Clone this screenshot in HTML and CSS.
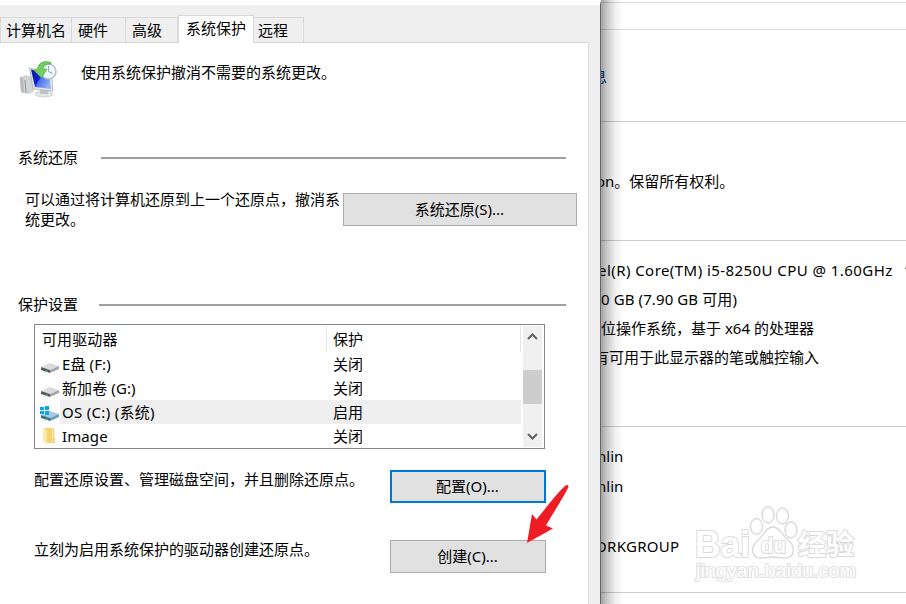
FILE: index.html
```html
<!DOCTYPE html>
<html lang="zh-CN">
<head>
    <meta charset="UTF-8">
    <meta name="viewport" content="width=device-width, initial-scale=1.0">
    <title>系统属性</title>
    <link rel="stylesheet" href="styles.css">
</head>
<body>
    <div class="screen">
        <div class="dialog">
            <div class="tabs">
                <div class="tab tab-name">计算机名</div>
                <div class="tab tab-hardware">硬件</div>
                <div class="tab tab-advanced">高级</div>
                <div class="tab tab-protect active">系统保护</div>
                <div class="tab tab-remote">远程</div>
            </div>

            <div class="panel">
                <div class="intro">
                    <svg class="intro-icon" width="38" height="38" viewBox="0 0 38 38">
                        <defs>
                            <linearGradient id="screen-blue" x1="0" y1="0" x2="1" y2=".6">
                                <stop offset="0" stop-color="#0a1a90"/>
                                <stop offset=".5" stop-color="#0a20d0"/>
                                <stop offset=".56" stop-color="#4a6cf0"/>
                                <stop offset="1" stop-color="#8fb0f8"/>
                            </linearGradient>
                        </defs>
                        <path d="M0 16l6-2 6 2 2 15-6 2-7-2z" fill="#d2d5d7"/>
                        <path d="M0 16l3 1 1 15-3-1z" fill="#b4b9bc"/>
                        <path d="M5 19l1 13" stroke="#8d9296"/>
                        <ellipse cx="24" cy="33" rx="9" ry="3" fill="#e3e6e7" stroke="#b6bbbd" stroke-width=".6"/>
                        <path d="M20 27l8 2v4h-8z" fill="#c0c4c6"/>
                        <path d="M9.500 7l22 5 1.500 18-20-2z" fill="#e4e7e9" stroke="#a4a9ad" stroke-width=".7"/>
                        <path d="M11 8.500l18 4.500 2 15-16-2z" fill="url(#screen-blue)"/>
                        <circle cx="28.500" cy="10.500" r="7.500" fill="#eff6fa" stroke="#b3c5ce" stroke-width="1.600"/>
                        <path d="M28.500 5v5.500l4 2" fill="none" stroke="#83aac0"/>
                        <path d="M31 1.500C24-1 18 2 17.500 8l-4 1 8 8 5.500-9h-4c0-3 3-5 8-5z" fill="#71cd61" stroke="#4ba342" stroke-width=".6"/>
                    </svg>
                    <span>使用系统保护撤消不需要的系统更改。</span>
                </div>

                <div class="group-title title-restore"><span>系统还原</span><i></i></div>
                <div class="restore">
                    <p>可以通过将计算机还原到上一个还原点，撤消系统更改。</p>
                    <button class="btn btn-restore">系统还原(S)...</button>
                </div>

                <div class="group-title title-settings"><span>保护设置</span><i></i></div>
                <div class="drives">
                    <div class="drive-list">
                        <div class="row head">
                            <div class="name">可用驱动器</div>
                            <div class="state">保护</div>
                        </div>
                        <div class="row">
                            <svg class="drive-icon" width="20" height="22" viewBox="0 0 20 22">
                                <path d="M1 15l9-4 9 3-9 4z" fill="#dcdcde"/>
                                <path d="M1 15l9 3v3l-9-3z" fill="#55585a"/>
                                <path d="M10 18l9-4v3l-9 4z" fill="#a4a6a9"/>
                                <path d="M6 18l2 .7v1L6 19z" fill="#35d33b"/>
                            </svg>
                            <div class="name">E盘 (F:)</div>
                            <div class="state">关闭</div>
                        </div>
                        <div class="row">
                            <svg class="drive-icon" width="20" height="22" viewBox="0 0 20 22">
                                <path d="M1 15l9-4 9 3-9 4z" fill="#dcdcde"/>
                                <path d="M1 15l9 3v3l-9-3z" fill="#55585a"/>
                                <path d="M10 18l9-4v3l-9 4z" fill="#a4a6a9"/>
                                <path d="M6 18l2 .7v1L6 19z" fill="#35d33b"/>
                            </svg>
                            <div class="name">新加卷 (G:)</div>
                            <div class="state">关闭</div>
                        </div>
                        <div class="row selected">
                            <svg class="drive-icon" width="20" height="22" viewBox="0 0 20 22">
                                <path d="M1 15l9-4 9 3-9 4z" fill="#a8c9e2"/>
                                <path d="M1 15l9 3v3l-9-3z" fill="#3f6b86"/>
                                <path d="M10 18l9-4v3l-9 4z" fill="#6c9abb"/>
                                <path d="M6 18l2 .7v1L6 19z" fill="#35d33b"/>
                                <path d="M0 7h4v3H0zM5 6h4v4H5zM0 11h4v3H0zM5 11h4v4H5z" fill="#00a8ed"/>
                            </svg>
                            <div class="name">OS (C:) (系统)</div>
                            <div class="state">启用</div>
                        </div>
                        <div class="row">
                            <svg class="drive-icon" width="20" height="22" viewBox="0 0 20 22">
                                <path d="M5 4h9v9l1 2v4H6z" fill="#f4d273"/>
                                <path d="M3 4l4 2v14l-4-2z" fill="#ffe9a5"/>
                                <path d="M12.500 4v14" stroke="#ffe8a0"/>
                            </svg>
                            <div class="name">Image</div>
                            <div class="state">关闭</div>
                        </div>
                    </div>
                    <div class="scrollbar">
                        <svg width="19" height="20" viewBox="0 0 19 20"><path d="M5 13l4.500-4.500L14 13" fill="none" stroke="#606060" stroke-width="2"/></svg>
                        <div class="thumb"></div>
                        <svg width="19" height="20" viewBox="0 0 19 20"><path d="M5 7l4.500 4.500L14 7" fill="none" stroke="#606060" stroke-width="2"/></svg>
                    </div>
                </div>

                <div class="action">
                    <span>配置还原设置、管理磁盘空间，并且删除还原点。</span>
                    <button class="btn focus">配置(O)...</button>
                </div>
                <div class="action">
                    <span>立刻为启用系统保护的驱动器创建还原点。</span>
                    <button class="btn">创建(C)...</button>
                </div>
            </div>
        </div>

        <div class="system-info">
            <div class="section toolbar"></div>
            <div class="section link-row"><a>息</a></div>
            <div class="section copyright"><p>on。保留所有权利。</p></div>
            <div class="section specs">
                <p class="cpu"><span>el(R) Core(TM) i5-8250U CPU @ 1.60GHz</span><span>1</span></p>
                <p class="ram">0 GB (7.90 GB 可用)</p>
                <p class="os">位操作系统，基于 x64 的处理器</p>
                <p class="pen">有可用于此显示器的笔或触控输入</p>
            </div>
            <div class="section computer">
                <p>nlin</p>
                <p>nlin</p>
                <p class="workgroup">ORKGROUP</p>
            </div>
            <div class="section rest"></div>
            <div class="shadow"></div>
        </div>

        <!-- red pointer to the create button -->
        <svg class="arrow" width="46" height="64" viewBox="0 0 46 64">
            <path d="M2 62l5-29 4.500 5.500C21 27 31 13 40.500 4.500q3-1.500 3 1.500C37 19 28 32 21 44.500l7 3z" fill="#ee1c25"/>
        </svg>

        <svg class="watermark" width="170" height="86" viewBox="0 0 170 86">
            <g fill="#fff" stroke="#dadada" stroke-width="1.400">
                <ellipse cx="66.500" cy="26.500" rx="6" ry="8"/>
                <ellipse cx="78" cy="15" rx="6" ry="8"/>
                <ellipse cx="92.500" cy="16" rx="6" ry="8"/>
                <ellipse cx="101" cy="30" rx="6" ry="8"/>
                <path d="M83 27c7 0 9 8 15 13 8 7 7 18-3 18-5 0-8-1-12-1s-7 1-12 1c-10 0-11-11-3-18 6-5 8-13 15-13z"/>
                <text class="wm-logo" x="5" y="57" textLength="55" lengthAdjust="spacingAndGlyphs">Bai</text>
                <text class="wm-du" x="71" y="53" textLength="25" lengthAdjust="spacingAndGlyphs">du</text>
                <text class="wm-cjk" x="108" y="55" textLength="56" lengthAdjust="spacingAndGlyphs">经验</text>
                <text class="wm-url" x="6" y="77" textLength="160" lengthAdjust="spacingAndGlyphs">jingyan.baidu.com</text>
            </g>
        </svg>
    </div>
</body>
</html>
```

FILE: styles.css
```css
* {
    box-sizing: border-box;
}

body {
    margin: 0;
    font-family: "Noto Sans", "Noto Sans CJK SC", sans-serif;
    font-size: 15px;
    color: #000;
    background-color: #fff;
}

p {
    margin: 0;
}

.screen {
    position: relative;
    display: flex;
    width: 906px;
    height: 604px;
    overflow: hidden;
}

/* dialog */
.dialog {
    flex: none;
    width: 601px;
    height: 604px;
    padding-right: 11px;
    border-top: 5px solid #fff;
    border-right: 1px solid #666;
    background-color: #efefef;
}

.tabs {
    display: flex;
    align-items: flex-end;
    height: 38px;
    padding-top: 10px;
    border-bottom: 1px solid #d9d9d9;
}

.tab {
    height: 25px;
    border: 1px solid #d9d9d9;
    border-left: 0;
    border-bottom: 0;
    line-height: 24px;
    white-space: nowrap;
}

.tab-name {
    width: 72px;
    border-left: 1px solid #d9d9d9;
    padding-left: 5px;
}

.tab-hardware {
    width: 54px;
    padding-left: 6px;
}

.tab-advanced {
    width: 52px;
    padding-left: 6px;
}

.tab-protect {
    width: 76px;
    padding-left: 7px;
}

.tab-remote {
    width: 50px;
    padding-left: 4px;
}

.tab.active {
    height: 28px;
    margin-bottom: -1px;
    border-left: 1px solid #d9d9d9;
    line-height: 25px;
    background-color: #fff;
}

.panel {
    height: 561px;
    border-right: 1px solid #d9d9d9;
    background-color: #fff;
}

.intro {
    display: flex;
    padding: 18px 0 0 20px;
    height: 104px;
    line-height: 22px;
}

.intro-icon {
    margin-right: 23px;
}

.group-title {
    display: flex;
    align-items: center;
    width: 566px;
    height: 22px;
    padding-left: 18px;
    line-height: 20px;
}

.group-title span {
    padding-bottom: 3px;
}

.group-title i {
    flex: 1;
    height: 2px;
    background-color: #a0a0a0;
}

.title-restore i {
    margin-left: 23px;
}

.title-settings i {
    margin-left: 21px;
}

.restore {
    display: flex;
    height: 125px;
    padding: 20px 0 0 25px;
}

.restore p {
    width: 318px;
    line-height: 20px;
}

.btn {
    width: 156px;
    height: 33px;
    padding: 0 1px 2px 0;
    border: 1px solid #adadad;
    background-color: #e1e1e1;
    font: inherit;
    color: #000;
}

.btn-restore {
    width: 234px;
    margin-top: 4px;
}

.btn.focus {
    border: 2px solid #0078d7;
}

/* drive list */
.drives {
    display: flex;
    justify-content: space-between;
    width: 511px;
    height: 125px;
    margin: 8px 0 21px 34px;
    padding: 1px 2px 0 0;
    border: 1px solid #828790;
}

.drive-list {
    width: 486px;
}

.row {
    display: flex;
    height: 24px;
    line-height: 24px;
    padding-left: 5px;
}

.row .name {
    flex: none;
    width: 267px;
    padding-left: 2px;
    letter-spacing: 0.1px;
}

.row .state {
    flex: 1;
    padding-left: 6px;
}

.row.head {
    height: 26px;
    line-height: 26px;
}

.row.head .name {
    width: 287px;
    border-right: 1px solid #e5e5e5;
}

.row.head .state {
    border-right: 1px solid #e5e5e5;
}

.row.selected {
    background: linear-gradient(#efefef, #efefef) 25px 0 no-repeat;
}

.row.selected .name {
    letter-spacing: 0.3px;
}

.scrollbar {
    display: flex;
    flex-direction: column;
    width: 19px;
    height: 121px;
    background-color: #f0f0f0;
}

.thumb {
    height: 34px;
    margin: 24px 0 23px;
    background-color: #cdcdcd;
}

.action {
    display: flex;
    width: 546px;
    height: 70px;
    padding-left: 34px;
    justify-content: space-between;
    line-height: 18px;
}

/* window behind the dialog */
.system-info {
    position: relative;
    flex: 1;
    min-width: 0;
    overflow: hidden;
    padding-top: 2px;
    white-space: nowrap;
}

.section {
    border-top: 1px solid #ccc;
}

.toolbar {
    height: 27px;
    border-color: #d9d9d9;
}

.link-row {
    height: 92px;
    padding-top: 36px;
    border-color: #d9d9d9;
    line-height: 20px;
}

.link-row a {
    margin-left: -9px;
    color: #0035a5;
}

.copyright {
    height: 119px;
    padding-top: 49px;
    line-height: 20px;
}

.copyright p {
    margin-left: -5px;
}

.specs {
    height: 186px;
    padding-top: 15px;
    line-height: 29px;
}

.cpu {
    display: flex;
    gap: 11px;
    margin-left: -3px;
    letter-spacing: 0.44px;
}

.ram {
    letter-spacing: 0.1px;
}

.pen {
    margin-left: -7px;
}

.computer {
    height: 166px;
    padding-top: 14px;
    line-height: 30px;
}

.computer p {
    margin-left: -4px;
}

.computer .workgroup {
    margin-top: 30px;
    margin-left: -6px;
    letter-spacing: 0.3px;
}

.shadow {
    position: absolute;
    top: 0;
    left: 0;
    width: 22px;
    height: 100%;
    background: linear-gradient(to right, rgba(0,0,0,0.36), rgba(0,0,0,0.2) 30%, rgba(0,0,0,0.06) 65%, rgba(0,0,0,0));
}

.arrow {
    position: absolute;
    left: 525px;
    top: 481px;
}

.watermark {
    position: absolute;
    left: 690px;
    top: 500px;
}

.watermark text {
    paint-order: stroke;
    stroke-width: 2px;
    font-weight: bold;
    font-family: "Liberation Sans", "Noto Sans CJK SC", sans-serif;
}

.watermark .wm-logo {
    font-size: 36px;
}

.watermark .wm-du {
    font-size: 22px;
}

.watermark .wm-cjk {
    font-size: 28px;
}

.watermark .wm-url {
    font-size: 18px;
    font-weight: normal;
    stroke: #e2e2e2;
}
```
